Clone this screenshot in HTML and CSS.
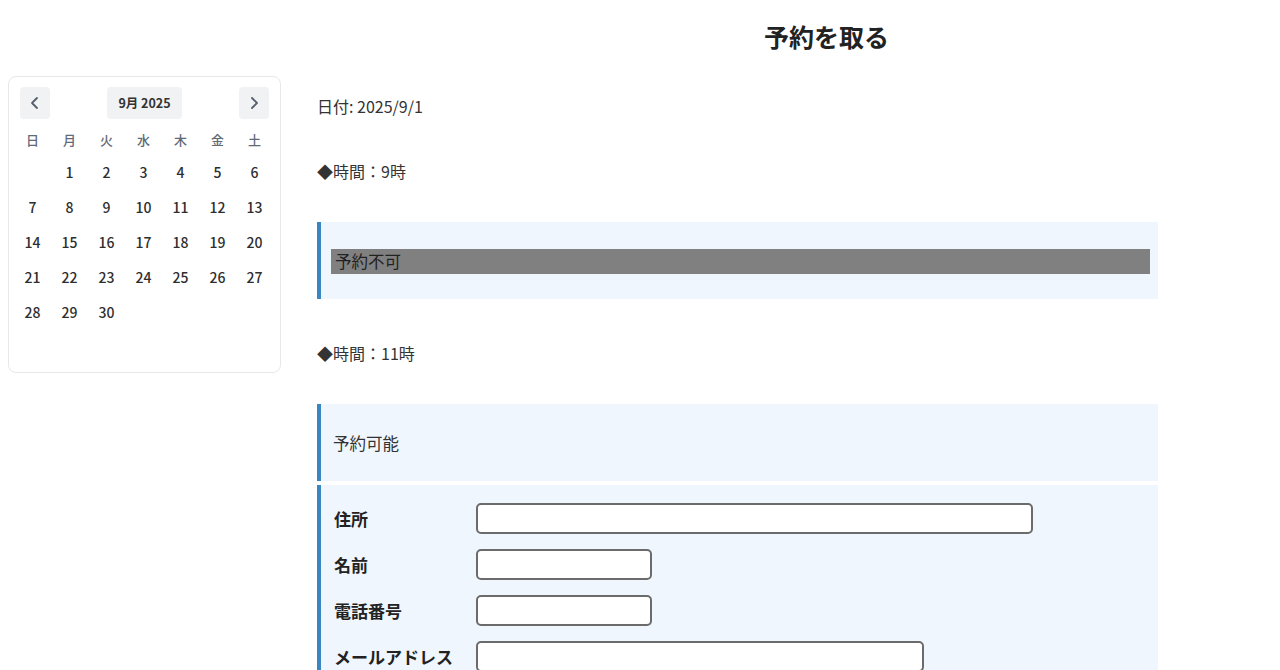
FILE: index.html
```html
<!doctype html>
<html lang="ja">
<head>
<meta charset="utf-8">
<title>予約を取る</title>
<meta name="viewport" content="width=device-width,initial-scale=1">
<link rel="stylesheet" href="styles.css">
</head>
<body>

<div class="page">
  <!-- month picker -->
  <aside class="calendar">
    <div class="cal-nav">
      <button class="cal-btn" aria-label="前の月">
        <svg width="14" height="14" viewBox="0 0 14 14"><path d="M9 2 L4 7 L9 12" fill="none" stroke="#555f6b" stroke-width="1.8" stroke-linecap="round" stroke-linejoin="round"/></svg>
      </button>
      <span class="cal-month">9月 2025</span>
      <button class="cal-btn" aria-label="次の月">
        <svg width="14" height="14" viewBox="0 0 14 14"><path d="M5 2 L10 7 L5 12" fill="none" stroke="#555f6b" stroke-width="1.8" stroke-linecap="round" stroke-linejoin="round"/></svg>
      </button>
    </div>
    <div class="cal-grid">
      <span class="wd">日</span><span class="wd">月</span><span class="wd">火</span><span class="wd">水</span><span class="wd">木</span><span class="wd">金</span><span class="wd">土</span>
      <span></span><span>1</span><span>2</span><span>3</span><span>4</span><span>5</span><span>6</span>
      <span>7</span><span>8</span><span>9</span><span>10</span><span>11</span><span>12</span><span>13</span>
      <span>14</span><span>15</span><span>16</span><span>17</span><span>18</span><span>19</span><span>20</span>
      <span>21</span><span>22</span><span>23</span><span>24</span><span>25</span><span>26</span><span>27</span>
      <span>28</span><span>29</span><span>30</span>
    </div>
  </aside>

  <main class="main">
    <h1>予約を取る</h1>

    <p class="date">日付: 2025/9/1</p>

    <p class="slot">◆時間：9時</p>
    <div class="box box-closed">
      <p class="closed">予約不可</p>
    </div>

    <p class="slot">◆時間：11時</p>
    <div class="box box-open">
      <p>予約可能</p>
    </div>
    <form class="box box-form">
      <label class="row"><span>住所</span><input type="text" class="in-address"></label>
      <label class="row"><span>名前</span><input type="text" class="in-short"></label>
      <label class="row"><span>電話番号</span><input type="tel" class="in-short"></label>
      <label class="row"><span>メールアドレス</span><input type="email" class="in-mail"></label>
    </form>
  </main>
</div>

</body>
</html>
```

FILE: styles.css
```css
*{box-sizing:border-box;margin:0;padding:0}
html,body{
  height:100%;
  font-family:"Noto Sans CJK JP","Noto Sans",sans-serif;
  color:#333;
  background:#fff;
  overflow:hidden;
}
body{padding:8px}

.page{
  display:flex;
  gap:36px;
  align-items:flex-start;
}

/* ---------- calendar ---------- */
.calendar{
  flex:0 0 273px;
  margin-top:68px;
  border:1px solid #e6e8eb;
  border-radius:8px;
  padding:10px 11px 43px;
}
.cal-nav{
  display:flex;
  justify-content:space-between;
  align-items:center;
}
.cal-btn{
  width:30px;height:32px;
  border:none;
  border-radius:4px;
  background:#f1f2f4;
  display:flex;
  justify-content:center;
  align-items:center;
  cursor:pointer;
}
.cal-month{
  height:32px;
  line-height:32px;
  padding:0 11px;
  border-radius:4px;
  background:#f1f2f4;
  font-size:12.5px;
  font-weight:700;
  color:#333;
}
.cal-grid{
  display:grid;
  grid-template-columns:repeat(7,37px);
  grid-template-rows:30px repeat(5,35px);
  margin:5px -6px 0;
  font-size:14px;
  font-weight:500;
  color:#2e2e2e;
}
.cal-grid span{display:flex;justify-content:center;align-items:center}
.cal-grid .wd{
  font-size:13px;
  color:#5f6b78;
}

/* ---------- main column ---------- */
.main{
  flex:0 0 841px;
}
h1{
  margin-top:11px;
  padding-left:178px;
  text-align:center;
  font-size:25px;
  line-height:34px;
  font-weight:700;
  color:#222;
}
.date,.slot{
  font-size:16px;
  line-height:22px;
}
.date{margin-top:42px}
.slot{margin-top:43px}

.box{
  background:#eff6fd;
  border-left:4px solid #3a86c1;
  font-size:16.5px;
}
.slot + .box{margin-top:40px}
.box-closed{
  padding:27px 8px 25px 10px;
}
.closed{
  background:#808080;
  color:#222;
  height:25px;
  line-height:25px;
  padding-left:4px;
}
.box-open{
  height:77px;
  padding-left:12px;
  display:flex;
  align-items:center;
}
.box-form{
  margin-top:4px;
  padding:18px 0 20px 13px;
  display:flex;
  flex-direction:column;
  gap:15px;
}
.row{
  display:grid;
  grid-template-columns:142px auto;
  align-items:center;
  justify-items:start;
}
.row span{
  font-size:17px;
  font-weight:700;
  color:#222;
}
.row input{
  height:31px;
  border:2px solid #6b6b6b;
  border-radius:5px;
  background:#fff;
  font:inherit;
  padding:0 6px;
}
.in-address{width:557px}
.in-short{width:176px}
.in-mail{width:448px}
```
